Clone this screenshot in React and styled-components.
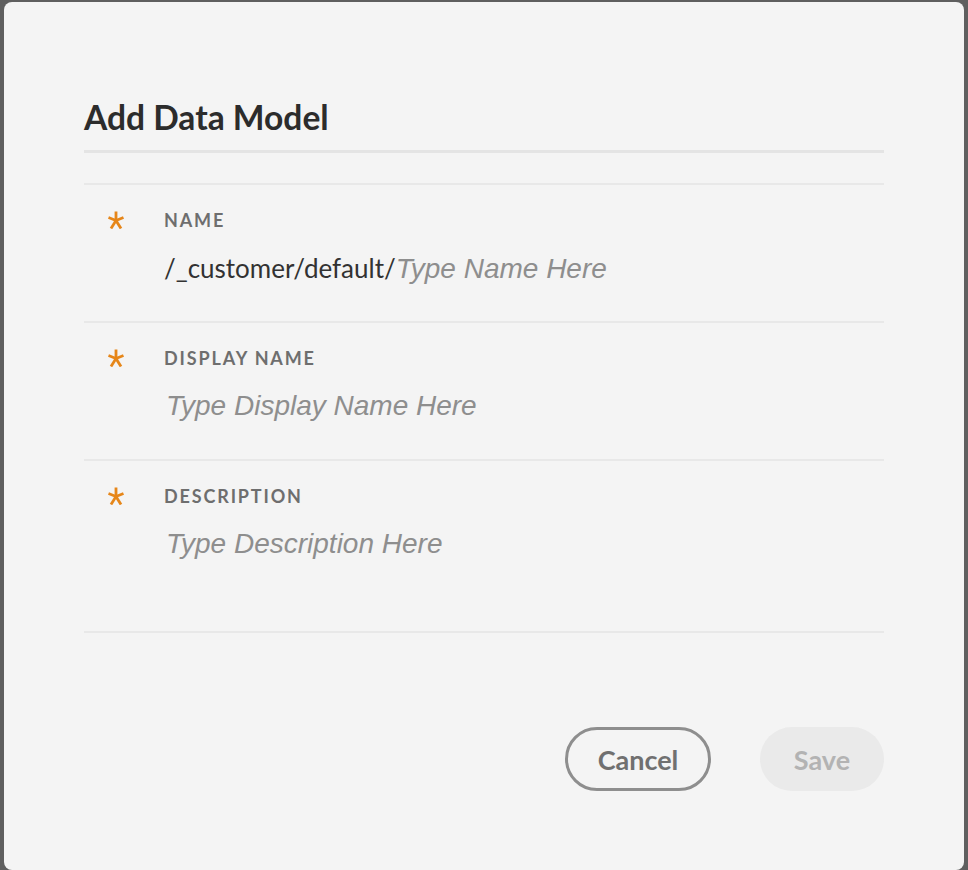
import React from 'react';
import styled, { createGlobalStyle } from 'styled-components';

const GlobalStyle = createGlobalStyle`
  html, body {
    margin: 0;
    padding: 0;
    background: #5f5f5f;
    overflow: hidden;
  }
  * {
    box-sizing: border-box;
  }
`;

const Backdrop = styled.div`
  width: 968px;
  height: 870px;
  padding: 2px 4px 0 4px;
`;

const Dialog = styled.div`
  height: 868px;
  background: #f4f4f4;
  border-radius: 8px;
  padding: 95px 80px 0 80px;
  display: flex;
  flex-direction: column;
  font-family: Lato, 'Open Sans', sans-serif;
`;

const Title = styled.h2`
  margin: 0;
  font-size: 33.6px;
  line-height: 40px;
  font-weight: 700;
  color: #2c2c2c;
`;

const HeaderDivider = styled.div`
  height: 3px;
  background: #e4e4e4;
  margin: 13px 0 30px;
`;

const Form = styled.div`
  display: flex;
  flex-direction: column;
  border-bottom: 2px solid #e8e8e8;
`;

const Row = styled.div`
  display: grid;
  grid-template-columns: 80px 1fr;
  border-top: 2px solid #e8e8e8;
  padding-top: 24px;
  height: ${(p) => p.$height}px;
`;

const Required = styled.div`
  padding: 2px 0 0 24px;
  svg {
    display: block;
  }
`;

const Field = styled.div`
  display: flex;
  flex-direction: column;
`;

const Label = styled.div`
  font-size: 18px;
  line-height: 22px;
  font-weight: 700;
  letter-spacing: 1.85px;
  text-transform: uppercase;
  color: #6e6e6e;
`;

const Value = styled.div`
  margin-top: 20px;
  display: flex;
  align-items: baseline;
  line-height: 34px;
  white-space: nowrap;
`;

const Prefix = styled.span`
  font-size: 26px;
  color: #323232;
`;

const Placeholder = styled.span`
  font-family: 'Liberation Sans', Arial, sans-serif;
  font-style: italic;
  font-size: 28px;
  color: #8e8e8e;
  margin-left: ${(p) => (p.$alone ? 2 : 0)}px;
`;

const Footer = styled.div`
  display: flex;
  justify-content: flex-end;
  gap: 49px;
  margin-top: 94px;
`;

const Button = styled.button`
  height: 64px;
  border-radius: 32px;
  font-family: Lato, 'Open Sans', sans-serif;
  font-size: 27px;
  font-weight: 700;
  padding: 0;
  width: ${(p) => p.$width}px;
  border: ${(p) => (p.$outline ? '3px solid #8e8e8e' : 'none')};
  background: ${(p) => (p.$outline ? 'transparent' : '#eaeaea')};
  color: ${(p) => (p.$outline ? '#707070' : '#b3b3b3')};
`;

const Asterisk = () => (
  <svg width="16" height="18" viewBox="0 0 16 18">
    <g stroke="#e68619" strokeWidth="2.8" strokeLinecap="butt" fill="none">
      <line x1="8" y1="9.5" x2="8" y2="0.5" />
      <line x1="8" y1="9.5" x2="0.5" y2="6.5" />
      <line x1="8" y1="9.5" x2="15.5" y2="6.5" />
      <line x1="8" y1="9.5" x2="3" y2="17.5" />
      <line x1="8" y1="9.5" x2="13" y2="17.5" />
    </g>
  </svg>
);

const fields = [
  { label: 'Name', prefix: '/_customer/default/', placeholder: 'Type Name Here', height: 138 },
  { label: 'Display Name', placeholder: 'Type Display Name Here', height: 138 },
  { label: 'Description', placeholder: 'Type Description Here', height: 172 },
];

export default function App() {
  return (
    <>
      <GlobalStyle />
      <Backdrop>
        <Dialog>
          <Title>Add Data Model</Title>
          <HeaderDivider />
          <Form>
            {fields.map((f) => (
              <Row key={f.label} $height={f.height}>
                <Required>
                  <Asterisk />
                </Required>
                <Field>
                  <Label>{f.label}</Label>
                  <Value>
                    {f.prefix && <Prefix>{f.prefix}</Prefix>}
                    <Placeholder $alone={!f.prefix}>{f.placeholder}</Placeholder>
                  </Value>
                </Field>
              </Row>
            ))}
          </Form>
          <Footer>
            <Button $outline $width={146}>Cancel</Button>
            <Button $width={124}>Save</Button>
          </Footer>
        </Dialog>
      </Backdrop>
    </>
  );
}
